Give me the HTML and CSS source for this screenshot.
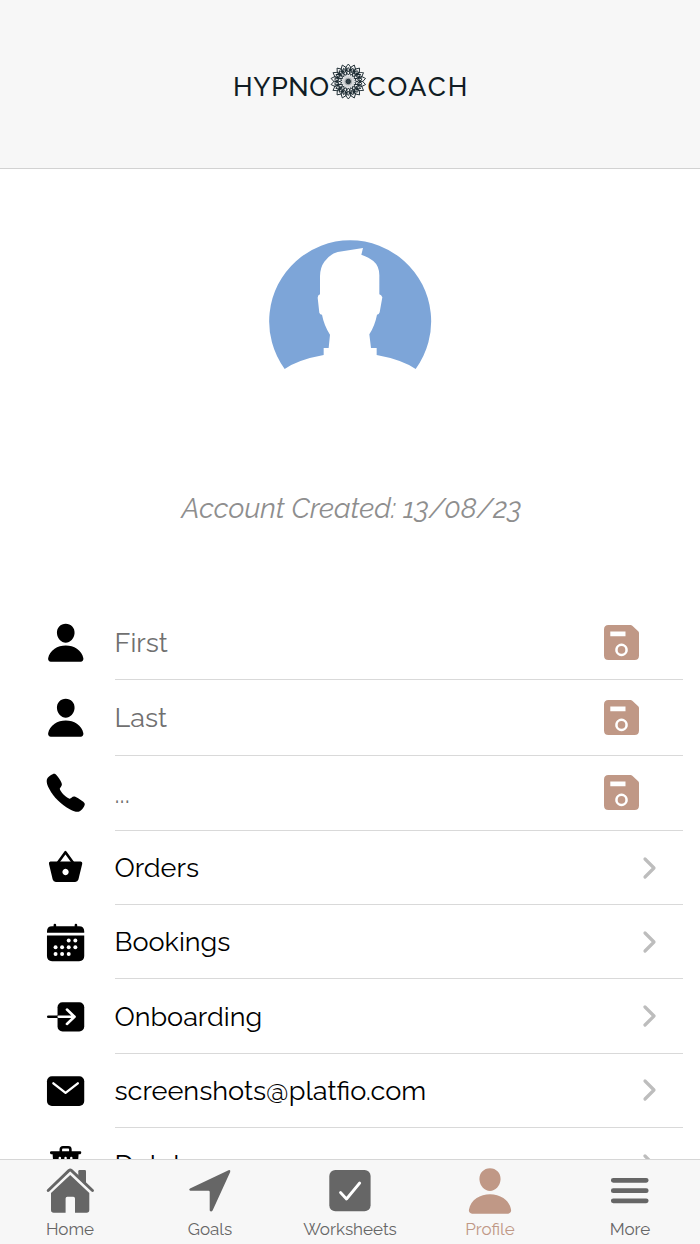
FILE: index.html
```html
<!DOCTYPE html>
<html lang="en">
<head>
    <meta charset="UTF-8">
    <meta name="viewport" content="width=device-width, initial-scale=1.0">
    <title>Profile</title>
    <link rel="stylesheet" href="styles.css">
</head>
<body>
    <!-- Shared icons -->
    <svg class="defs" aria-hidden="true">
        <symbol id="person" viewBox="0 0 512 512">
            <path d="M332.64 64.58C313.18 43.57 286 32 256 32c-30.16 0-57.43 11.5-76.8 32.38-19.58 21.11-29.12 49.8-26.88 80.78C156.76 206.28 203.27 256 256 256s99.16-49.71 103.67-110.82c2.27-30.7-7.33-59.33-27.03-80.6zM432 480H80a31 31 0 01-24.2-11.13c-6.5-7.77-9.12-18.38-7.18-29.11C57.06 392.94 83.4 353.61 124.8 326c36.78-24.51 83.37-38 131.2-38s94.42 13.5 131.2 38c41.4 27.6 67.74 66.93 76.18 113.75 1.94 10.73-.68 21.34-7.18 29.11A31 31 0 01432 480z"/>
        </symbol>
        <symbol id="save" viewBox="0 0 35 35">
            <path fill-rule="evenodd" d="M4.500 0H26.500Q27.500 0 28.300.7L34.200 6.300Q35 7 35 8.200V30.500Q35 35 30.500 35H4.500Q0 35 0 30.500V4.500Q0 0 4.500 0ZM6.300 6.500V11.300H21.500V6.500ZM17.500 18.600a6.300 6.300 0 1 0 .01 0Z"/>
            <circle cx="17.500" cy="24.900" r="3.800"/>
        </symbol>
        <symbol id="chevron" viewBox="0 0 16 24">
            <path d="M3 3L12 12L3 21" fill="none" stroke="currentColor" stroke-width="3.200" stroke-linecap="round" stroke-linejoin="round"/>
        </symbol>
        <g id="petals">
            <path id="petal" d="M0-17.500L3-13.500L0-9.500L-3-13.500ZM0-14L2.500-10L0-6.500L-2.500-10Z"/>
            <use href="#petal" transform="rotate(20)"/>
            <use href="#petal" transform="rotate(40)"/>
        </g>
    </svg>

    <!-- Header -->
    <header class="header">
        <svg class="logo" viewBox="0 0 240 44" role="img" aria-label="Hypno Coach">
            <text x="3" y="36" textLength="96">HYPNO</text>
            <g class="mandala" transform="translate(118.300 21.500)">
                <use href="#petals"/>
                <use href="#petals" transform="rotate(60)"/>
                <use href="#petals" transform="rotate(120)"/>
                <use href="#petals" transform="rotate(180)"/>
                <use href="#petals" transform="rotate(240)"/>
                <use href="#petals" transform="rotate(300)"/>
                <circle class="ring" r="11.500"/>
                <circle class="core" r="5"/>
                <circle class="dot" r="2.200"/>
            </g>
            <text x="137.500" y="36" textLength="100">COACH</text>
        </svg>
    </header>

    <!-- Profile -->
    <main class="content">
        <svg class="avatar" viewBox="0 0 570 450">
            <path d="M89 417A243 243 0 1 1 482 417Q441 389 365 375V354H348L343 313Q360 286 366 254Q372 254 374 247L382 202Q379 194 373 193V139Q374 109 355 93Q343 83 319 74L324 54L248 66Q225 72 208 95Q195 113 195 139V193Q188 196 188 203L193 248Q195 254 201 254Q207 286 225 314L221 354H206V375Q129 389 89 417Z"/>
        </svg>
        <p class="created">Account Created: <span>13/08/23</span></p>

        <ul class="list">
            <li class="row field">
                <svg class="icon"><use href="#person"/></svg>
                <div class="inner">
                    <input type="text" placeholder="First">
                    <svg class="save"><use href="#save"/></svg>
                </div>
            </li>
            <li class="row field">
                <svg class="icon"><use href="#person"/></svg>
                <div class="inner">
                    <input type="text" placeholder="Last">
                    <svg class="save"><use href="#save"/></svg>
                </div>
            </li>
            <li class="row field">
                <svg class="icon" viewBox="0 0 512 512">
                    <path d="M391 480c-19.520 0-46.940-7.060-88-30-49.930-28-88.550-53.850-138.210-103.380C116.910 298.770 93.610 267.790 61 208.450c-36.840-67-30.560-102.120-23.540-117.130C45.820 73.380 58.160 62.650 74.110 52a176.300 176.300 0 0128.640-15.200c1-.43 1.930-.84 2.760-1.210 4.950-2.230 12.450-5.600 21.950-2 6.340 2.380 12 7.250 20.860 16 18.170 17.920 43 57.830 52.160 77.430 6.150 13.210 10.220 21.930 10.230 31.710 0 11.450-5.760 20.280-12.750 29.810-1.310 1.790-2.610 3.500-3.870 5.160-7.610 10-9.280 12.890-8.180 18.050 2.230 10.370 18.860 41.240 46.190 68.510s57.310 42.850 67.720 45.070c5.380 1.150 8.330-.59 18.650-8.470 1.480-1.130 3-2.300 4.590-3.470 10.660-7.930 19.080-13.540 30.260-13.540h.06c9.730 0 18.060 4.220 31.860 11.180 18 9.080 59.110 33.590 77.140 51.780 8.770 8.840 13.660 14.480 16.050 20.810 3.600 9.530.21 17-2 22-.37.83-.78 1.740-1.210 2.750a176.490 176.490 0 01-15.290 28.580c-10.630 15.900-21.400 28.210-39.380 36.580A67.420 67.420 0 01391 480z"/>
                </svg>
                <div class="inner">
                    <input class="phone" type="text" placeholder="...">
                    <svg class="save"><use href="#save"/></svg>
                </div>
            </li>
            <li class="row">
                <svg class="icon" viewBox="0 0 44 44">
                    <path d="M14 17L21.700 6.300L29.400 17" fill="none" stroke="#000" stroke-width="2.600" stroke-linejoin="round"/>
                    <path fill-rule="evenodd" d="M6.500 15.700H37.200Q39 16 38.700 18L34.800 34Q34 36.500 31.500 36.500H12Q9.500 36.500 8.800 34L5 18Q4.600 16 6.500 15.700ZM21.800 23.100a3.200 3.200 0 1 0 .01 0Z"/>
                </svg>
                <div class="inner"><span>Orders</span><svg class="chevron"><use href="#chevron"/></svg></div>
            </li>
            <li class="row">
                <svg class="icon" viewBox="0 0 44 44">
                    <path d="M3 12V10.500Q3 5.300 8.200 5.300H9.700V4A1.300 1.300 0 0 1 12.300 4V5.300H31V4A1.300 1.300 0 0 1 33.600 4V5.300H35.500Q40.700 5.300 40.700 10.500V12ZM3 14.700H40.700V35.500Q40.700 40.700 35.500 40.700H8.200Q3 40.700 3 35.500Z"/>
                    <g fill="#fff">
                        <circle cx="25" cy="19.700" r="2"/><circle cx="31.700" cy="19.700" r="2"/>
                        <circle cx="11.700" cy="26.500" r="2"/><circle cx="18.300" cy="26.500" r="2"/><circle cx="25" cy="26.500" r="2"/><circle cx="31.700" cy="26.500" r="2"/>
                        <circle cx="11.700" cy="33.300" r="2"/><circle cx="18.300" cy="33.300" r="2"/><circle cx="25" cy="33.300" r="2"/>
                    </g>
                </svg>
                <div class="inner"><span>Bookings</span><svg class="chevron"><use href="#chevron"/></svg></div>
            </li>
            <li class="row">
                <svg class="icon" viewBox="0 0 44 44">
                    <rect x="13.700" y="7.300" width="27" height="29.600" rx="5"/>
                    <g fill="none" stroke-width="2.600" stroke-linecap="round" stroke-linejoin="round">
                        <path d="M4.300 22H14" stroke="#000"/>
                        <path d="M14.900 22H31M23.200 14.700L30.800 22L23.200 29.300" stroke="#fff"/>
                    </g>
                </svg>
                <div class="inner"><span>Onboarding</span><svg class="chevron"><use href="#chevron"/></svg></div>
            </li>
            <li class="row">
                <svg class="icon" viewBox="0 0 44 44">
                    <rect x="3" y="7.300" width="37.700" height="30" rx="5"/>
                    <path d="M9.500 14.500L21.800 24.100L34.200 14.500" fill="none" stroke="#fff" stroke-width="2.400" stroke-linecap="round" stroke-linejoin="round"/>
                </svg>
                <div class="inner"><span class="email">screenshots@platfio.com</span><svg class="chevron"><use href="#chevron"/></svg></div>
            </li>
            <li class="row">
                <svg class="icon" viewBox="0 0 44 44">
                    <path d="M17 9V6.500Q17 4.300 19.200 4.300H24.500Q26.700 4.300 26.700 6.500V9" fill="none" stroke="#000" stroke-width="2.600"/>
                    <path d="M7 8.300H36.700Q37.700 8.300 37.700 9.700T36.700 11.300H35L33 38Q32.500 41 29.500 41H14.200Q11 41 10.700 38L8.700 11.300H7Q6 11 6 9.700T7 8.300Z"/>
                    <path d="M16 15V35M21.800 15V35M27.600 15V35" stroke="#fff" stroke-width="2.400" stroke-linecap="round"/>
                </svg>
                <div class="inner"><span>Delete</span><svg class="chevron"><use href="#chevron"/></svg></div>
            </li>
        </ul>
    </main>

    <!-- Bottom tabs -->
    <nav class="tabs">
        <a class="tab">
            <svg viewBox="0 0 52 52">
                <path d="M34.300 6.200Q34.300 5 35.500 5H40.800Q42 5 42 6.200V19L34.300 12Z"/>
                <path d="M4.200 25.500L24.800 5.600Q26.200 4.500 27.600 5.600L48.500 25.500" fill="none" stroke="currentColor" stroke-width="2.900" stroke-linecap="round"/>
                <path d="M26.200 10L45.300 28V45Q45.300 47.700 42.600 47.700H31V33.500Q31 31.700 29.300 31.700H23.300Q21.600 31.700 21.600 33.500V47.700H9.700Q7 47.700 7 45V28Z"/>
            </svg>
            <span>Home</span>
        </a>
        <a class="tab">
            <svg viewBox="0 0 52 52">
                <path d="M6 23.500L44.500 5.200Q46.800 4.600 46.200 7L28.600 45.500Q27 47.500 25.700 45.500V26.900Q25.700 25.700 24.500 25.700H6.300Q4.300 25 6 23.500Z"/>
            </svg>
            <span>Goals</span>
        </a>
        <a class="tab">
            <svg viewBox="0 0 52 52">
                <rect x="5.300" y="5" width="41.300" height="41.300" rx="6"/>
                <path d="M16.500 27.500L22.500 34L35.700 18" fill="none" stroke="#fff" stroke-width="2.800" stroke-linecap="round" stroke-linejoin="round"/>
            </svg>
            <span>Worksheets</span>
        </a>
        <a class="tab active">
            <svg viewBox="0 0 512 512"><use href="#person"/></svg>
            <span>Profile</span>
        </a>
        <a class="tab">
            <svg viewBox="0 0 52 52">
                <path d="M9.300 15.300H42.200M9.300 25.700H42.200M9.300 35.800H42.200" stroke="currentColor" stroke-width="4.800" stroke-linecap="round"/>
            </svg>
            <span>More</span>
        </a>
    </nav>
</body>
</html>
```

FILE: styles.css
```css
* {
    box-sizing: border-box;
}

body {
    margin: 0;
    height: 1244px;
    display: flex;
    flex-direction: column;
    overflow: hidden;
    background: #fff;
    color: #000;
    font-family: Raleway, Lato, sans-serif;
    font-size: 27px;
}

svg {
    display: block;
    flex-shrink: 0;
    fill: currentColor;
}

.defs {
    display: none;
}

/* Header */
.header {
    flex: none;
    height: 169px;
    padding-top: 60px;
    background: #f7f7f7;
    border-bottom: 1px solid #d2d2d2;
}

.logo {
    width: 240px;
    height: 44px;
    margin: 0 auto;
    color: #101c24;
    font-size: 26.5px;
    font-weight: 500;
}

.mandala {
    fill: none;
    stroke: #1b2a31;
    stroke-width: 0.9;
}

.ring {
    stroke-width: 0.6;
}

.core {
    fill: #a3a8aa;
    stroke: #d5d8da;
    stroke-width: 2.5;
}

.dot {
    fill: #34424a;
}

/* Profile */
.content {
    flex: 1;
    min-height: 0;
    overflow: hidden;
}

.avatar {
    width: 190px;
    height: 150px;
    margin: 61px auto 0;
    color: #7da5d8;
}

.created {
    margin: 109px 0 0;
    padding-left: 3px;
    line-height: 40px;
    text-align: center;
    font-size: 27.9px;
    font-style: italic;
    color: #8e8e8e;
}

.list {
    list-style: none;
    margin: 76px 0 0;
    padding: 0 17px 0 44px;
}

.row {
    display: flex;
    align-items: center;
    height: 74.3px;
}

.field {
    height: 75.3px;
}

.icon {
    width: 43.5px;
    height: 43.5px;
    margin-right: 27px;
}

.inner {
    flex: 1;
    align-self: stretch;
    display: flex;
    align-items: center;
    justify-content: space-between;
    border-bottom: 1px solid #d9d9d9;
}

input {
    width: 400px;
    height: 44px;
    padding: 0;
    border: 0;
    outline: 0;
    background: none;
    font: inherit;
}

input::placeholder {
    color: #707070;
}

.phone {
    padding-top: 1px;
}

.email {
    font-size: 27.1px;
}

.save {
    width: 35px;
    height: 35px;
    margin-right: 44px;
    color: #c09886;
}

.chevron {
    width: 16px;
    height: 24px;
    margin-right: 25.5px;
    color: #bdbdbd;
}

/* Bottom tabs */
.tabs {
    flex: none;
    display: flex;
    height: 85px;
    padding-top: 5px;
    background: #f7f7f7;
    border-top: 1px solid #d6d6d6;
}

.tab {
    flex: 1;
    display: flex;
    flex-direction: column;
    align-items: center;
    color: #666;
    font-size: 17px;
    line-height: 24px;
}

.tab svg {
    width: 52px;
    height: 52px;
}

.active {
    color: #c09886;
}
```
